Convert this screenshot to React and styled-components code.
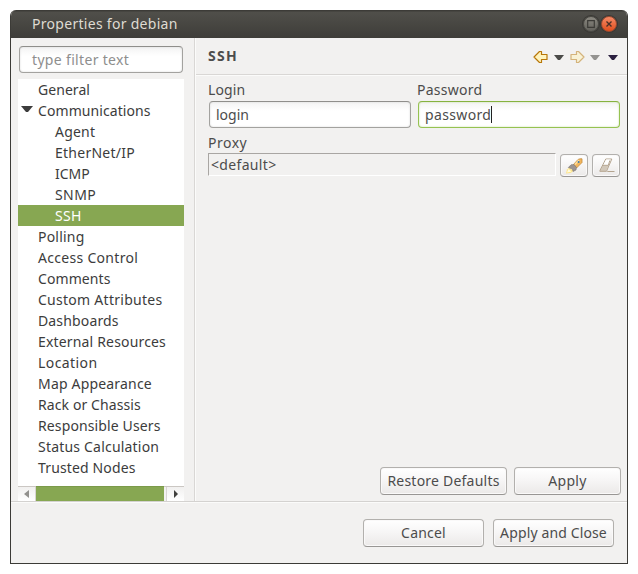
import React from "react";
import styled, { createGlobalStyle } from "styled-components";

const GlobalStyle = createGlobalStyle`
  *, *::before, *::after { box-sizing: border-box; }
  html, body { margin: 0; background: #fff; }
  body { font: 14px/21px "Noto Sans", "Open Sans", sans-serif; color: #4c4c4c; overflow: hidden; }
`;

const Desktop = styled.div`
  width: 638px;
  height: 574px;
  padding: 10px;
  background: #fff;
`;
const Window = styled.main`
  width: 618px;
  height: 554px;
  display: grid;
  grid-template-rows: 28px 463px 1fr;
  border: 1px solid #3c3b37;
  border-top: 0;
  border-radius: 6px 6px 0 0;
  background: #f2f1f0;
  overflow: hidden;
`;
const TitleBar = styled.header`
  display: flex;
  align-items: center;
  gap: 2px;
  padding: 0 10px 0 21px;
  background: linear-gradient(#3c3b37 0, #3c3b37 1px, #504f4a 2px, #3e3d39 100%);
  color: #dfdbd2;
`;
const Title = styled.div`
  flex: 1;
  padding-bottom: 2px;
`;
const WindowButton = styled.button`
  width: 16px;
  height: 16px;
  padding: 0;
  display: grid;
  place-items: center;
  border: 1px solid ${p => (p.$close ? "#9a4a30" : "#4a4944")};
  border-radius: 50%;
  background: ${p => (p.$close ? "linear-gradient(#f58a66, #e04e1d)" : "linear-gradient(#8a8880, #62615b)")};
  box-shadow: 0 0 0 1px #393834;
  & svg { display: block; }
`;
const Text = styled.span`
  white-space: pre;
  letter-spacing: ${p => p.$ls || 0}px;
`;
const Body = styled.div`
  display: grid;
  grid-template-columns: 183px 1fr;
  min-height: 0;
`;
const Sidebar = styled.aside`
  display: flex;
  flex-direction: column;
  padding: 8px 0 0 7px;
`;
const Field = styled.div`
  height: 27px;
  display: flex;
  align-items: center;
  padding: 0 6px;
  border: 1px solid ${p => (p.$focus ? "#96c251" : "#a3a29f")};
  border-top-color: ${p => (p.$focus ? "#86b23f" : "#8f8e8b")};
  border-radius: 4px;
  background: linear-gradient(#f3f3f3, #fff 9px);
  box-shadow: inset 0 0 2px ${p => (p.$focus ? "#c3dda0" : "#d6d6d6")};
  color: #4c4c4c;
`;
const FilterField = styled(Field)`
  width: 164px;
  margin: 0 0 6px 1px;
  padding: 0 0 1px 12px;
  color: #8e8e8e;
`;
const Tree = styled.ul`
  list-style: none;
  width: 166px;
  height: 407px;
  margin: 0;
  padding: 0;
  background: #fff;
  color: #3c3c3c;
`;
const TreeRow = styled.li`
  height: 21px;
  display: flex;
  align-items: center;
  padding-left: ${p => (p.$open ? 3 : p.$depth ? 37 : 20)}px;
  background: ${p => (p.$selected ? "#87a752" : "transparent")};
  color: ${p => (p.$selected ? "#fff" : "inherit")};
`;
const Twisty = styled.svg`
  width: 12px;
  height: 6px;
  margin: 0 5px 3px 0;
`;
const ScrollBar = styled.div`
  width: 166px;
  height: 15px;
  display: grid;
  grid-template-columns: 18px 128px 2px 18px;
  border-top: 1px solid #cbc7c3;
  background: #f2f1f0;
`;
const ScrollEnd = styled.div`
  display: grid;
  place-items: center;
  background: linear-gradient(#f1f0ef, #fff);
  border-left: ${p => (p.$right ? "1px solid #d8d5d3" : "0")};
  border-right: ${p => (p.$right ? "0" : "1px solid #d8d5d3")};
`;
const Thumb = styled.div`
  margin-top: -1px;
  background: #87a752;
  border-top: 1px solid #7b9a49;
`;
const Main = styled.section`
  display: grid;
  grid-template-rows: 37px 1fr;
  border-left: 1px solid #d9d7d5;
  box-shadow: inset 1px 0 #fbfbfa;
`;
const PageHeader = styled.div`
  display: flex;
  align-items: center;
  justify-content: space-between;
  margin-left: 1px;
  padding: 0 9px 0 12px;
  border-bottom: 1px solid #d9d7d5;
  box-shadow: 0 1px #fbfbfa;
`;
const PageTitle = styled.div`
  padding-bottom: 1px;
  font-weight: 700;
`;
const NavTools = styled.div`
  display: flex;
  align-items: center;
  height: 14px;
  margin-top: 2px;
`;
const NavIcon = styled.svg`
  display: block;
  width: ${p => p.$w}px;
  height: 14px;
  margin-left: ${p => p.$gap || 0}px;
`;
const Form = styled.div`
  display: flex;
  flex-direction: column;
  padding: 4px 7px 6px 13px;
`;
const Credentials = styled.div`
  display: grid;
  grid-template-columns: 203px 203px;
  gap: 6px;
  margin-bottom: 4px;
`;
const Label = styled.div`
  height: 22px;
`;
const Caret = styled.i`
  width: 1px;
  height: 17px;
  background: #222;
`;
const LabelledField = styled.div`
  & > ${Field} { margin-left: 1px; }
`;
const ProxyRow = styled.div`
  display: flex;
  align-items: flex-start;
  gap: 4px;
  margin-top: -1px;
`;
const ReadOnly = styled.div`
  width: 348px;
  height: 23px;
  display: flex;
  align-items: center;
  padding-left: 2px;
  border: 1px solid #fff;
  border-top: 1px solid #a9a6a3;
  border-left-color: #a9a6a3;
`;
const Button = styled.button`
  width: ${p => p.$w}px;
  height: 28px;
  padding: 0 0 1px;
  display: flex;
  align-items: center;
  justify-content: center;
  border: 1px solid #b2b0ad;
  border-bottom-color: #989694;
  border-radius: 4px;
  background: linear-gradient(#fff, #f7f6f6 45%, #ebe9e8);
  box-shadow: inset 0 0 0 1px #faf9f9;
  color: #4c4c4c;
  font: inherit;
`;
const IconButton = styled(Button)`
  height: 23px;
  margin-top: 1px;
  padding: 0;
  & svg { display: block; }
`;
const PageActions = styled.div`
  display: flex;
  justify-content: flex-end;
  gap: 7px;
  margin: auto -1px 0 0;
`;
const Footer = styled.footer`
  display: flex;
  justify-content: flex-end;
  gap: 9px;
  padding: 17px 13px 0;
  border-top: 1px solid #d4d2d0;
  box-shadow: inset 0 1px #fbfbfa;
`;

const pages = [
  { name: "General", ls: 0.05 },
  { name: "Communications", ls: 0.08, open: true },
  { name: "Agent", ls: 0.2, depth: 1 },
  { name: "EtherNet/IP", ls: 0.25, depth: 1 },
  { name: "ICMP", depth: 1 },
  { name: "SNMP", ls: 0.4, depth: 1 },
  { name: "SSH", ls: 0.35, depth: 1, selected: true },
  { name: "Polling", ls: 0.2 },
  { name: "Access Control", ls: 0.3 },
  { name: "Comments", ls: 0.08 },
  { name: "Custom Attributes", ls: 0.27 },
  { name: "Dashboards", ls: 0.15 },
  { name: "External Resources", ls: 0.17 },
  { name: "Location", ls: 0.42 },
  { name: "Map Appearance", ls: 0.18 },
  { name: "Rack or Chassis", ls: 0.1 },
  { name: "Responsible Users", ls: 0.12 },
  { name: "Status Calculation", ls: 0.2 },
  { name: "Trusted Nodes", ls: 0.14 },
];

const Arrow = ({ forward, gap }) => (
  <NavIcon $w={15} $gap={gap} viewBox="0 0 15 14" opacity={forward ? 0.5 : 1}>
    <path
      transform={forward ? "translate(15 0) scale(-1 1)" : undefined}
      d="M1 7 6.5 1.5H8.5V4.5H14V9.5H8.5V12.5H6.5Z"
      fill="#fff3bd" stroke="#b87708" strokeWidth="1.2" strokeLinejoin="round"
    />
  </NavIcon>
);
const Chevron = ({ color, gap }) => (
  <NavIcon $w={10} $gap={gap} viewBox="0 0 10 14"><path d="M0 5h10L6 10H4Z" fill={color} /></NavIcon>
);
const Rocket = () => (
  <svg width="18" height="16" viewBox="0 0 18 16">
    <path d="M1 15.5 2 11.5 4.5 9.5 8.5 13 5.5 15Z" fill="#ffe58a" />
    <path d="M2 14.5 3.5 11 6.5 13.5Z" fill="#fffce0" />
    <path d="M8.5 6.5 13 1.5Q14.5 .5 17 .8V4.5L11.5 10Z" fill="#f3b65c" stroke="#c18a3c" strokeWidth=".8" />
    <path d="m10 6.5 4-4.5" stroke="#ffdf9e" strokeWidth="1.5" />
    <path d="M3.3 9.5 6 6.8 9 6.5 11.5 9.5 11 12 8 13.5 7.5 11Z" fill="#9b9491" stroke="#7e7774" strokeWidth=".6" />
    <circle cx="13.6" cy="4" r="1" fill="#3d7ba5" />
  </svg>
);
const Eraser = () => (
  <svg width="18" height="16" viewBox="0 0 18 16" fill="none">
    <path d="M5.8 7.5H11.5L9 13.2H3Z" fill="#d2c8ba" />
    <path d="M8.8 1H14.8L9.5 13.3H2.8L3.2 12Z" stroke="#b4a48f" strokeLinejoin="round" />
    <path d="M9.2 1.5H13.5L11.5 7H6.4Z" fill="#fff" />
    <path d="M5.8 7.3H11.3L12.8 2.5M10.3 13.5H17.5" stroke="#b4a48f" />
  </svg>
);

export default function App() {
  return (
    <Desktop>
      <GlobalStyle />
      <Window>
        <TitleBar>
          <Title><Text $ls={0.29}>Properties for debian</Text></Title>
          <WindowButton aria-label="Maximize">
            <svg width="8" height="8" viewBox="0 0 8 8"><path d="M.7 .7h6.6v6.6H.7Z" fill="none" stroke="#3c3b37" strokeWidth="1.2" /></svg>
          </WindowButton>
          <WindowButton $close aria-label="Close">
            <svg width="8" height="8" viewBox="0 0 8 8"><path d="m1.5 1.5 5 5m0-5-5 5" stroke="#493027" strokeWidth="1.4" /></svg>
          </WindowButton>
        </TitleBar>
        <Body>
          <Sidebar>
            <FilterField><Text $ls={0.33}>type filter text</Text></FilterField>
            <Tree>
              {pages.map(p => (
                <TreeRow key={p.name} $depth={p.depth} $open={p.open} $selected={p.selected}>
                  {p.open && <Twisty viewBox="0 0 12 6"><path d="M0 0h12L7 6H5Z" fill="#3c3c3c" /></Twisty>}
                  <Text $ls={p.ls}>{p.name}</Text>
                </TreeRow>
              ))}
            </Tree>
            <ScrollBar>
              <ScrollEnd><svg width="6" height="8" viewBox="0 0 6 8"><path d="M5 0v8L0 4Z" fill="#92918e" /></svg></ScrollEnd>
              <Thumb />
              <i />
              <ScrollEnd $right><svg width="6" height="8" viewBox="0 0 6 8"><path d="M1 0v8l4-4Z" fill="#3f3f3c" /></svg></ScrollEnd>
            </ScrollBar>
          </Sidebar>
          <Main>
            <PageHeader>
              <PageTitle><Text $ls={1.3}>SSH</Text></PageTitle>
              <NavTools>
                <Arrow />
                <Chevron color="#4b4b48" gap={6} />
                <Arrow forward gap={6} />
                <Chevron color="#949390" gap={5} />
                <Chevron color="#2b2040" gap={8} />
              </NavTools>
            </PageHeader>
            <Form>
              <Credentials>
                <LabelledField><Label><Text $ls={0.1}>Login</Text></Label><Field><Text>login</Text></Field></LabelledField>
                <LabelledField><Label><Text $ls={0.25}>Password</Text></Label><Field $focus><Text $ls={0.35}>password</Text><Caret /></Field></LabelledField>
              </Credentials>
              <Label><Text $ls={0.5}>Proxy</Text></Label>
              <ProxyRow>
                <ReadOnly><Text $ls={0.33}>&lt;default&gt;</Text></ReadOnly>
                <IconButton $w={28} aria-label="Select"><Rocket /></IconButton>
                <IconButton $w={28} aria-label="Clear"><Eraser /></IconButton>
              </ProxyRow>
              <PageActions>
                <Button $w={127}><Text $ls={0.22}>Restore Defaults</Text></Button>
                <Button $w={107}><Text $ls={0.3}>Apply</Text></Button>
              </PageActions>
            </Form>
          </Main>
        </Body>
        <Footer>
          <Button $w={121}><Text $ls={0.2}>Cancel</Text></Button>
          <Button $w={121}><Text $ls={0.13}>Apply and Close</Text></Button>
        </Footer>
      </Window>
    </Desktop>
  );
}
